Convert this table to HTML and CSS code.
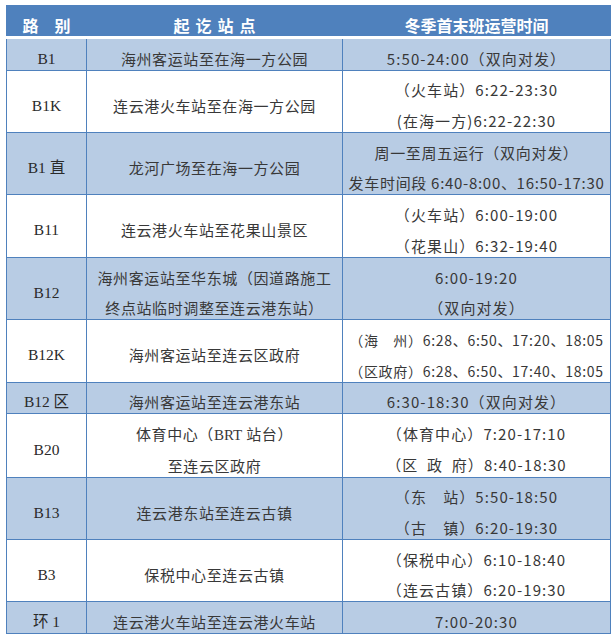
FILE: index.html
```html
<!DOCTYPE html>
<html lang="zh-CN">
<head>
<meta charset="utf-8">
<title>冬季首末班运营时间</title>
<link rel="stylesheet" href="styles.css">
</head>
<body>
<table class="bus">
  <colgroup>
    <col class="c1">
    <col class="c2">
    <col class="c3">
  </colgroup>
  <thead>
    <tr>
      <th class="h1">路　别</th>
      <th class="h2">起讫站点</th>
      <th class="h3">冬季首末班运营时间</th>
    </tr>
  </thead>
  <tbody>
    <tr class="alt">
      <td class="route">B1</td>
      <td>海州客运站至在海一方公园</td>
      <td class="time">5:50-24:00（双向对发）</td>
    </tr>
    <tr>
      <td class="route">B1K</td>
      <td>连云港火车站至在海一方公园</td>
      <td class="time"><div class="ln">（火车站）6:22-23:30</div><div class="ln">(在海一方)6:22-22:30</div></td>
    </tr>
    <tr class="alt">
      <td class="route">B1 直</td>
      <td>龙河广场至在海一方公园</td>
      <td class="time tight"><div class="ln">周一至周五运行（双向对发）</div><div class="ln">发车时间段 6:40-8:00、16:50-17:30</div></td>
    </tr>
    <tr>
      <td class="route">B11</td>
      <td>连云港火车站至花果山景区</td>
      <td class="time"><div class="ln">（火车站）6:00-19:00</div><div class="ln">（花果山）6:32-19:40</div></td>
    </tr>
    <tr class="alt">
      <td class="route">B12</td>
      <td><div class="ln">海州客运站至华东城（因道路施工</div><div class="ln">终点站临时调整至连云港东站）</div></td>
      <td class="time"><div class="ln">6:00-19:20</div><div class="ln">（双向对发）</div></td>
    </tr>
    <tr>
      <td class="route">B12K</td>
      <td>海州客运站至连云区政府</td>
      <td class="time small"><div class="ln">（海　州）6:28、6:50、17:20、18:05</div><div class="ln">（区政府）6:28、6:50、17:40、18:05</div></td>
    </tr>
    <tr class="alt">
      <td class="route">B12 区</td>
      <td>海州客运站至连云港东站</td>
      <td class="time">6:30-18:30（双向对发）</td>
    </tr>
    <tr>
      <td class="route">B20</td>
      <td><div class="ln">体育中心（<span class="latin">BRT</span> 站台）</div><div class="ln">至连云区政府</div></td>
      <td class="time"><div class="ln">（体育中心）7:20-17:10</div><div class="ln">（区&ensp;政&ensp;府）8:40-18:30</div></td>
    </tr>
    <tr class="alt">
      <td class="route">B13</td>
      <td>连云港东站至连云古镇</td>
      <td class="time"><div class="ln">（东　站）5:50-18:50</div><div class="ln">（古　镇）6:20-19:30</div></td>
    </tr>
    <tr>
      <td class="route">B3</td>
      <td>保税中心至连云古镇</td>
      <td class="time"><div class="ln">（保税中心）6:10-18:40</div><div class="ln">（连云古镇）6:20-19:30</div></td>
    </tr>
    <tr class="alt">
      <td class="route">环 1</td>
      <td>连云港火车站至连云港火车站</td>
      <td class="time">7:00-20:30</td>
    </tr>
  </tbody>
</table>
</body>
</html>
```

FILE: styles.css
```css
html, body {
  margin: 0;
  padding: 0;
  background: #ffffff;
}

body {
  padding: 5px 0 0 6px;
}

.bus {
  border-collapse: collapse;
  table-layout: fixed;
  width: 604px;
  font-family: "Noto Sans CJK SC", sans-serif;
  font-weight: 400;
  font-size: 15px;
  color: #383838;
  letter-spacing: 0.6px;
}

.c1 { width: 80px; }
.c2 { width: 256px; }
.c3 { width: 268px; }

.bus th {
  background: #4f81bd;
  color: #ffffff;
  font-weight: 700;
  font-size: 16px;
  letter-spacing: 0;
  height: 30px;
  box-sizing: border-box;
  line-height: 22px;
  padding: 8px 0 0;
  border: 1px solid #4f81bd;
  border-bottom: 3px solid #ffffff;
  text-align: center;
  vertical-align: top;
}

.bus th.h2 {
  letter-spacing: 6px;
  text-indent: 6px;
}

.bus td {
  border: 1px solid #4f81bd;
  padding: 8.7px 0 0;
  text-align: center;
  line-height: 22px;
  vertical-align: middle;
  white-space: nowrap;
}

.ln + .ln {
  margin-top: 8.7px;
}

.bus tr.alt td {
  background: #b8cce4;
}

.bus td.time {
  letter-spacing: 1.1px;
}

.bus td.time.tight {
  letter-spacing: 0.7px;
}

.bus td.route {
  font-family: "Liberation Serif", "Times New Roman", "Noto Sans CJK SC", serif;
  font-weight: 400;
  letter-spacing: 0;
  font-size: 15.5px;
  color: #2a2a2a;
}

.latin {
  font-family: "Liberation Serif", "Times New Roman", serif;
  font-weight: 400;
  letter-spacing: 0;
}

.bus td.time.small {
  font-size: 14px;
  letter-spacing: 0.7px;
}
```
